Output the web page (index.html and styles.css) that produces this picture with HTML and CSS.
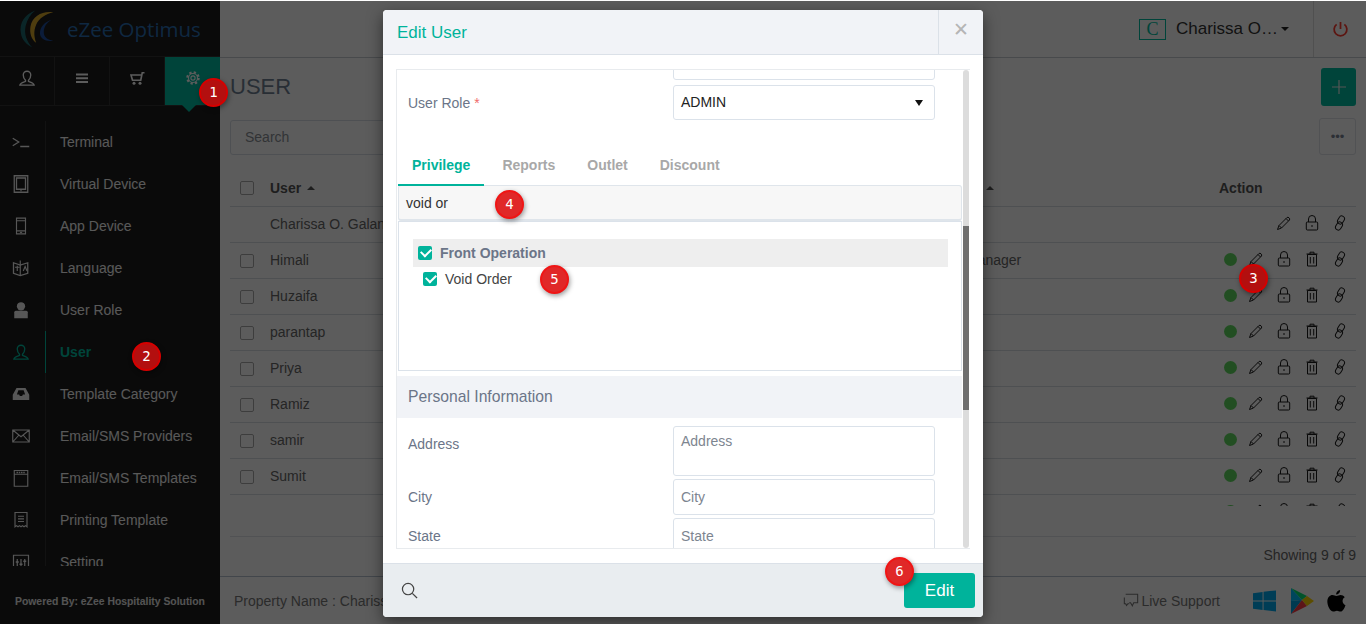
FILE: index.html
```html
<!DOCTYPE html>
<html lang="en">
<head>
<meta charset="utf-8">
<title>Edit User</title>
<link rel="stylesheet" href="styles.css">
</head>
<body>
<svg class="defs" width="0" height="0" aria-hidden="true">
  <symbol id="i-user" viewBox="0 0 24 24"><path d="M12 3a5 5 0 0 1 5 5c0 3-1.500 5.500-3 7v1.500c2.500 1 7 1.800 7.500 5H2.500c.5-3.200 5-4 7.500-5V15c-1.500-1.500-3-4-3-7a5 5 0 0 1 5-5z" fill="none" stroke="currentColor" stroke-width="1.800"/></symbol>
  <symbol id="i-pencil" viewBox="0 0 16 16"><path d="M3 10.500 11 2.500c1-1 3.500 1 2.500 2.500l-8 8L1.500 14.500zM3 10.500l2.500 2.500M10 3.500l2.500 2.500" fill="none" stroke="currentColor" stroke-width="1"/></symbol>
  <symbol id="i-lock" viewBox="0 0 16 16"><path d="M4.500 7V4a3.500 3.500 0 0 1 7 0v3M3.300 7h9.400a1 1 0 0 1 1 1v6a1 1 0 0 1-1 1H3.300a1 1 0 0 1-1-1V8a1 1 0 0 1 1-1zM8 10v2" fill="none" stroke="currentColor" stroke-width="1"/></symbol>
  <symbol id="i-trash" viewBox="0 0 16 16"><path d="M3.500 3.500h9v11.500h-9zM2.500 3h11M6 3V1.200h4V3M6.300 6v6.500M9.700 6v6.500" fill="none" stroke="currentColor" stroke-width="1"/></symbol>
  <symbol id="i-link" viewBox="0 0 16 16"><rect x="6.200" y="0.800" width="5.600" height="8.400" rx="2.800" transform="rotate(30 9 5)" fill="none" stroke="currentColor" stroke-width="1"/><rect x="4.200" y="6.800" width="5.600" height="8.400" rx="2.800" transform="rotate(30 7 11)" fill="none" stroke="currentColor" stroke-width="1"/></symbol>
</svg>

<div class="app">
  <aside class="sidebar">
    <div class="brand">
      <svg class="brand-logo" viewBox="0 0 42 42" aria-hidden="true">
        <path d="M17 1C6 5 0 14 2 25c1 7 6 12 12 15C8 33 5 26 7 17 9 10 12 5 17 1z" fill="#1d6a70"/>
        <path d="M36 3C26 1 14 6 12 18c-1 7 1 13 6 17-2-6-3-12 0-19C21 9 28 5 36 3z" fill="#d9a92c"/>
        <path d="M34 11c-7 2-12 7-12 14 0 5 5 9 14 8-6-1-10-4-10-9 0-6 3-10 8-13z" fill="#1f4fa0"/>
      </svg>
      <span class="brand-name">eZee Optimus</span>
    </div>
    <div class="side-tabs">
      <div class="side-tab"><svg class="tab-ico" aria-hidden="true"><use href="#i-user"/></svg></div>
      <div class="side-tab"><svg class="tab-ico" viewBox="0 0 24 24" aria-hidden="true"><path d="M4 6h16v2.500H4zM4 11h16v2.500H4zM4 16h16v2.500H4z" fill="currentColor"/></svg></div>
      <div class="side-tab"><svg class="tab-ico" viewBox="0 0 24 24" aria-hidden="true"><path d="M22 5h-3l-2 10H6L4 8h14" fill="none" stroke="currentColor" stroke-width="2.200"/><circle cx="8" cy="19" r="2" fill="currentColor"/><circle cx="16" cy="19" r="2" fill="currentColor"/></svg></div>
      <div class="side-tab side-tab-active"><svg class="tab-ico" viewBox="0 0 24 24" aria-hidden="true"><circle cx="12" cy="12" r="7.500" fill="none" stroke="currentColor" stroke-width="3" stroke-dasharray="3 2.900"/><circle cx="12" cy="12" r="6" fill="none" stroke="currentColor" stroke-width="1.500"/><circle cx="12" cy="12" r="2.800" fill="none" stroke="currentColor" stroke-width="1.500"/></svg></div>
    </div>
    <nav class="menu">
      <a class="menu-item"><span class="menu-ico"><svg class="m-svg" viewBox="0 0 24 24" aria-hidden="true"><path d="M1 7l8 5-8 5M11 18h12" fill="none" stroke="currentColor" stroke-width="1.700"/></svg></span><span class="menu-label">Terminal</span></a>
      <a class="menu-item"><span class="menu-ico"><svg class="m-svg" viewBox="0 0 24 24" aria-hidden="true"><path d="M3 1h18v22H3zM6 4h12v15H6z" fill="none" stroke="currentColor" stroke-width="1.700"/><circle cx="12" cy="21" r="1" fill="currentColor"/></svg></span><span class="menu-label">Virtual Device</span></a>
      <a class="menu-item"><span class="menu-ico"><svg class="m-svg" viewBox="0 0 24 24" aria-hidden="true"><path d="M6 1.500h12v21H6zM6 5h12M6 18.500h12" fill="none" stroke="currentColor" stroke-width="1.500"/><path d="M10.500 20.500h3" stroke="currentColor" stroke-width="1.500"/></svg></span><span class="menu-label">App Device</span></a>
      <a class="menu-item"><span class="menu-ico"><svg class="m-svg" viewBox="0 0 24 24" aria-hidden="true"><path d="M2 5l9 3 10-3v14l-10 3-9-3z" fill="none" stroke="currentColor" stroke-width="1.700"/><path d="M11 2v20M4 11h6M7 9v7M15 16l2.500-6 2.500 6" fill="none" stroke="currentColor" stroke-width="1.500"/></svg></span><span class="menu-label">Language</span></a>
      <a class="menu-item"><span class="menu-ico"><svg class="m-svg" viewBox="0 0 24 24" aria-hidden="true"><circle cx="12" cy="7" r="5.500" fill="currentColor"/><path d="M5 13h14a2 2 0 0 1 2 2v8H3v-8a2 2 0 0 1 2-2z" fill="currentColor"/></svg></span><span class="menu-label">User Role</span></a>
      <a class="menu-item menu-item-active"><span class="menu-ico"><svg class="m-svg" aria-hidden="true"><use href="#i-user"/></svg></span><span class="menu-label">User</span></a>
      <a class="menu-item"><span class="menu-ico"><svg class="m-svg" viewBox="0 0 24 24" aria-hidden="true"><path d="M6 4h12l5 9v7H1v-7zM6.500 12.500h3l1 2h3l1-2h3L15.500 7h-7z" fill="currentColor" fill-rule="evenodd"/></svg></span><span class="menu-label">Template Category</span></a>
      <a class="menu-item"><span class="menu-ico"><svg class="m-svg" viewBox="0 0 24 24" aria-hidden="true"><path d="M1 4h22v16H1zM1 4l11 9 11-9M1 20l8-9M23 20l-8-9" fill="none" stroke="currentColor" stroke-width="1.500"/></svg></span><span class="menu-label">Email/SMS Providers</span></a>
      <a class="menu-item"><span class="menu-ico"><svg class="m-svg" viewBox="0 0 24 24" aria-hidden="true"><path d="M3 2h18v21H3zM3 7h18" fill="none" stroke="currentColor" stroke-width="1.500"/><path d="M6 4.500h12" stroke="currentColor" stroke-width="2" stroke-dasharray="2 1"/></svg></span><span class="menu-label">Email/SMS Templates</span></a>
      <a class="menu-item"><span class="menu-ico"><svg class="m-svg" viewBox="0 0 24 24" aria-hidden="true"><path d="M4 2h16v19l-2-1.500-2 1.500-2-1.500-2 1.500-2-1.500-2 1.500-2-1.500-2 1.500zM8 7h8M8 10.500h8M8 14h8" fill="none" stroke="currentColor" stroke-width="1.500"/></svg></span><span class="menu-label">Printing Template</span></a>
      <a class="menu-item"><span class="menu-ico"><svg class="m-svg" viewBox="0 0 24 24" aria-hidden="true"><path d="M2 3h20v18H2zM7 8v11M12 8v11M17 8v11" fill="none" stroke="currentColor" stroke-width="1.600"/><path d="M5 12h4M10 15h4M15 11h4" stroke="currentColor" stroke-width="2"/></svg></span><span class="menu-label">Setting</span></a>
    </nav>
    <div class="powered">Powered By: eZee Hospitality Solution</div>
  </aside>

  <div class="main">
    <header class="topbar">
      <span class="avatar">C</span>
      <span class="user-name">Charissa O…</span>
      <span class="caret-down"></span>
      <span class="power">
        <svg class="power-ico" viewBox="0 0 24 24" aria-hidden="true"><path d="M12 2v10M6.500 5.500a9 9 0 1 0 11 0" fill="none" stroke="currentColor" stroke-width="2.500"/></svg>
      </span>
    </header>
    <section class="content">
      <div class="title-row">
        <h1 class="title">USER</h1>
        <button class="add-btn" type="button" aria-label="Add"><svg class="add-ico" viewBox="0 0 16 16" aria-hidden="true"><path d="M8 1v14M1 8h14" stroke="currentColor" stroke-width="1.200"/></svg></button>
      </div>
      <div class="tool-row">
        <div class="search">Search</div>
        <button class="more-btn" type="button">•••</button>
      </div>
      <div class="thead">
        <span class="chk"></span>
        <span class="th-name">User <i class="caret-up"></i></span>
        <span class="th-role">Role <i class="caret-up"></i></span>
        <span class="th-action">Action</span>
      </div>
      <div class="tbody">
        <div class="row"><span class="chk-none"></span><span class="cell-name">Charissa O. Galang</span><span class="cell-role"></span><span class="acts"><svg class="act"><use href="#i-pencil"/></svg><svg class="act"><use href="#i-lock"/></svg><svg class="act"><use href="#i-link"/></svg></span></div>
        <div class="row"><span class="chk"></span><span class="cell-name">Himali</span><span class="cell-role">Manager</span><span class="acts"><i class="dot"></i><svg class="act"><use href="#i-pencil"/></svg><svg class="act"><use href="#i-lock"/></svg><svg class="act"><use href="#i-trash"/></svg><svg class="act"><use href="#i-link"/></svg></span></div>
        <div class="row"><span class="chk"></span><span class="cell-name">Huzaifa</span><span class="cell-role"></span><span class="acts"><i class="dot"></i><svg class="act"><use href="#i-pencil"/></svg><svg class="act"><use href="#i-lock"/></svg><svg class="act"><use href="#i-trash"/></svg><svg class="act"><use href="#i-link"/></svg></span></div>
        <div class="row"><span class="chk"></span><span class="cell-name">parantap</span><span class="cell-role"></span><span class="acts"><i class="dot"></i><svg class="act"><use href="#i-pencil"/></svg><svg class="act"><use href="#i-lock"/></svg><svg class="act"><use href="#i-trash"/></svg><svg class="act"><use href="#i-link"/></svg></span></div>
        <div class="row"><span class="chk"></span><span class="cell-name">Priya</span><span class="cell-role"></span><span class="acts"><i class="dot"></i><svg class="act"><use href="#i-pencil"/></svg><svg class="act"><use href="#i-lock"/></svg><svg class="act"><use href="#i-trash"/></svg><svg class="act"><use href="#i-link"/></svg></span></div>
        <div class="row"><span class="chk"></span><span class="cell-name">Ramiz</span><span class="cell-role"></span><span class="acts"><i class="dot"></i><svg class="act"><use href="#i-pencil"/></svg><svg class="act"><use href="#i-lock"/></svg><svg class="act"><use href="#i-trash"/></svg><svg class="act"><use href="#i-link"/></svg></span></div>
        <div class="row"><span class="chk"></span><span class="cell-name">samir</span><span class="cell-role"></span><span class="acts"><i class="dot"></i><svg class="act"><use href="#i-pencil"/></svg><svg class="act"><use href="#i-lock"/></svg><svg class="act"><use href="#i-trash"/></svg><svg class="act"><use href="#i-link"/></svg></span></div>
        <div class="row"><span class="chk"></span><span class="cell-name">Sumit</span><span class="cell-role"></span><span class="acts"><i class="dot"></i><svg class="act"><use href="#i-pencil"/></svg><svg class="act"><use href="#i-lock"/></svg><svg class="act"><use href="#i-trash"/></svg><svg class="act"><use href="#i-link"/></svg></span></div>
        <div class="row"><span class="chk-none"></span><span class="cell-name"></span><span class="cell-role"></span><span class="acts"><i class="dot"></i><svg class="act"><use href="#i-pencil"/></svg><svg class="act"><use href="#i-lock"/></svg><svg class="act"><use href="#i-trash"/></svg><svg class="act"><use href="#i-link"/></svg></span></div>
      </div>
      <div class="showing">Showing 9 of 9</div>
    </section>
    <footer class="footer">
      <span class="prop">Property Name : Charissa</span>
      <span class="support">
        <svg class="support-ico" viewBox="0 0 18 18" aria-hidden="true"><path d="M3 1.500h13.500V11H12l-1.500 3.500L8.500 11H7" fill="none" stroke="currentColor" stroke-width="1.200"/><path d="M1.500 5v7h1.500l1 2 1.500-2H7" fill="none" stroke="currentColor" stroke-width="1.200"/></svg>
        Live Support
      </span>
      <svg class="store win" viewBox="0 0 24 22" aria-hidden="true"><path d="M0 3l10-1.500v9H0zM11 1.300 24 0v10.500H11zM0 11.500h10v9L0 19zM11 11.500h13V22l-13-1.500z" fill="#00aaee"/></svg>
      <svg class="store play" viewBox="0 0 24 26" aria-hidden="true"><path d="M1 0v13l11-1z" fill="#00c3ff"/><path d="M1 0l11 12 5-4z" fill="#00e676"/><path d="M1 26V13l11-1z" fill="#00a0e0"/><path d="M1 26l11-14 5 6z" fill="#ff3a44"/><path d="M12 12l5-4 7 5-7 5z" fill="#ffd500"/></svg>
      <svg class="store apple" viewBox="0 0 20 24" aria-hidden="true"><path d="M14 0c0 3-2 5-4.500 5C9.500 2.500 11.500.5 14 0zM10 6.500c1.500 0 2.500-1 4.500-1 1.500 0 3.500.8 4.500 2.500-3.500 2-3 7 .8 8.500-1 3-3 7-5.300 7-1.500 0-2.500-1-4-1s-2.500 1-4 1C3 23.500 0 17 0 12.500 0 8 3 5.500 5.500 5.500c2 0 3 1 4.500 1z" fill="#000"/></svg>
    </footer>
  </div>
</div>

<div class="overlay"></div>

<div class="modal" role="dialog" aria-label="Edit User">
  <div class="modal-head">
    <span class="modal-title">Edit User</span>
    <span class="modal-close">✕</span>
  </div>
  <div class="modal-body">
    <div class="scroller">
      <div class="form">
        <div class="form-row clip-row"><label class="lbl">Job Group</label><div class="input"></div></div>
        <div class="form-row role-row"><label class="lbl">User Role <em class="req">*</em></label><div class="input select">ADMIN<i class="sel-caret"></i></div></div>
        <div class="tabs">
          <span class="tab tab-active">Privilege</span>
          <span class="tab">Reports</span>
          <span class="tab">Outlet</span>
          <span class="tab">Discount</span>
        </div>
        <div class="filter">void or</div>
        <div class="tree">
          <div class="tree-head"><span class="cb"></span><span class="tree-title">Front Operation</span></div>
          <div class="tree-item"><span class="cb"></span><span>Void Order</span></div>
        </div>
        <div class="section-bar">Personal Information</div>
        <div class="form-row address-row"><label class="lbl lbl-top">Address</label><div class="input area ph">Address</div></div>
        <div class="form-row city-row"><label class="lbl">City</label><div class="input ph">City</div></div>
        <div class="form-row city-row"><label class="lbl">State</label><div class="input ph">State</div></div>
      </div>
      <div class="sbar"><div class="sthumb"></div></div>
    </div>
  </div>
  <div class="modal-foot">
    <svg class="foot-search" viewBox="0 0 18 18" aria-hidden="true"><circle cx="7.500" cy="7.500" r="6" fill="none" stroke="currentColor" stroke-width="1.300"/><path d="M12 12l5 5" stroke="currentColor" stroke-width="1.300"/></svg>
    <button class="edit-btn" type="button">Edit</button>
  </div>
</div>

<span class="badge dim b1">1</span>
<span class="badge dim b2">2</span>
<span class="badge dim b3">3</span>
<span class="badge b4">4</span>
<span class="badge b5">5</span>
<span class="badge b6">6</span>
</body>
</html>
```

FILE: styles.css
```css
* { box-sizing: border-box; }
html, body { margin: 0; height: 624px; overflow: hidden; }
body { font-family: "Liberation Sans", Arial, sans-serif; font-size: 14px; color: #333; background: #fff; position: relative; }
.defs { position: absolute; }
svg { display: block; }

.app { display: flex; height: 624px; padding-top: 1px; background: #fff; }
.overlay { position: absolute; inset: 1px 0 0 0; background: rgba(0,0,0,.64); z-index: 10; }

/* sidebar */
.sidebar { width: 220px; flex: none; background: #1c1c1c; display: flex; flex-direction: column; color: #f5f5f5; }
.brand { height: 56px; display: flex; align-items: center; padding-left: 19px; border-bottom: 1px solid #333; }
.brand-logo { width: 40px; height: 41px; flex: none; margin-top: 1px; }
.brand-name { font-family: "Open Sans", sans-serif; font-size: 20.500px; color: #2a6fb4; margin-left: 8px; }
.side-tabs { display: flex; height: 49px; border-bottom: 1px solid #333; }
.side-tab { width: 55px; display: flex; align-items: center; justify-content: center; border-right: 1px solid #333; padding-bottom: 6px; }
.side-tab-active { background: #00bda1; border-right: 0; position: relative; height: 48px; }
.side-tab-active::after { content: ""; position: absolute; left: 17px; top: 48px; border: 7px solid transparent; border-top-color: #00bda1; border-bottom: 0; }
.tab-ico { width: 18px; height: 18px; color: #fff; }
.menu { margin-top: 15px; height: 445px; overflow: hidden; flex: none; }
.menu-item { display: flex; height: 42px; align-items: center; }
.menu-ico { width: 46px; height: 42px; flex: none; border-right: 1px solid #333; display: flex; align-items: center; padding-left: 12px; }
.m-svg { width: 18px; height: 18px; color: #f2f2f2; }
.menu-label { margin-left: 14px; font-size: 14px; margin-top: -1px; }
.menu-item-active .menu-ico { border-right: 1px solid #00bda1; }
.menu-item-active .m-svg { color: #00bda1; }
.menu-item-active .menu-label { color: #00bda1; font-weight: 700; }
.powered { font-size: 10.400px; font-weight: 700; padding: 30px 0 0 15px; color: #e8e8e8; white-space: nowrap; }

/* main */
.main { flex: 1; display: flex; flex-direction: column; min-width: 0; }
.topbar { height: 57px; flex: none; display: flex; align-items: center; justify-content: flex-end; border-bottom: 1px solid #c8ccd2; background: #fff; }
.avatar { width: 27px; height: 21px; border: 1px solid #00bda1; color: #00bda1; font-family: "Liberation Serif", serif; font-size: 18px; line-height: 19px; text-align: center; margin-right: 10px; }
.user-name { font-size: 17px; color: #333; width: 105px; white-space: nowrap; }
.caret-down { border: 4px solid transparent; border-top: 4px solid #222; border-bottom: 0; margin: 0 24px 0 0; }
.power { width: 53px; height: 56px; border-left: 1px solid #ddd; display: flex; align-items: center; justify-content: center; }
.power-ico { width: 17px; height: 18px; color: #ff3b30; }
.content { flex: 1; padding: 10px 10px 0; min-height: 0; }
.title-row { display: flex; justify-content: space-between; align-items: center; height: 38px; }
.title { margin: 0; font-size: 22px; font-weight: 400; color: #6f7f94; }
.add-btn { width: 35px; height: 38px; background: #00bda1; border: 0; border-radius: 3px; color: #e8e8e8; padding: 0; display: flex; align-items: center; justify-content: center; }
.add-ico { width: 16px; height: 16px; }
.tool-row { display: flex; justify-content: space-between; margin-top: 12px; height: 37px; }
.search { width: 400px; height: 35px; margin-top: 2px; border: 1px solid #d8dee6; border-radius: 3px; color: #8a8f96; padding: 8px 14px; }
.more-btn { width: 37px; height: 37px; border: 1px solid #dfe2e8; border-radius: 3px; background: #fff; color: #7a8494; font: 13px/1 "Liberation Sans", Arial, sans-serif; padding: 0; }
.thead { margin-top: 16px; height: 36px; display: flex; align-items: center; padding: 0 0 2px 10px; border-bottom: 1px solid #d8dde2; font-weight: 700; color: #555; }
.th-name { margin-left: 16px; width: 680px; }
.th-role { width: 269px; }
.th-action { color: #555; }
.caret-up { display: inline-block; border: 4px solid transparent; border-bottom: 4px solid #555; border-top: 0; vertical-align: 3px; margin-left: 2px; }
.chk, .chk-none { width: 14px; height: 14px; flex: none; }
.chk { border: 1.500px solid #aaa; border-radius: 2px; background: #fff; }
.tbody { height: 299px; overflow: hidden; }
.row { height: 36px; flex: none; display: flex; align-items: center; padding-left: 10px; border-bottom: 1px solid #d8dde2; color: #666; }
.cell-name { margin-left: 16px; width: 702px; white-space: nowrap; margin-top: -1px; }
.cell-role { width: 200px; margin-top: -1px; margin-left: -6px; }
.acts { margin-left: auto; display: flex; align-items: center; gap: 12px; padding-right: 8px; margin-top: -3px; }
.act { width: 16px; height: 16px; color: #1a1a1a; }
.dot { width: 13px; height: 13px; background: #60d860; border-radius: 50%; margin-right: -1px; }
.showing { margin-top: 30px; height: 40px; border-top: 1px solid #dfe2e8; text-align: right; line-height: 37px; color: #666; }
.footer { height: 48px; flex: none; margin-top: 0; display: flex; align-items: center; padding: 0 20px 0 14px; border-top: 1px solid #b8c2cf; color: #777; }
.prop { flex: 1; white-space: nowrap; }
.support { display: flex; align-items: center; gap: 2px; margin-right: 33px; }
.support-ico { width: 16px; height: 16px; }
.store { flex: none; }
.win { width: 23px; height: 22px; margin-right: 14px; }
.play { width: 24px; height: 26px; margin-right: 13px; }
.apple { width: 19px; height: 22px; }

/* modal */
.modal { position: absolute; left: 383px; top: 10px; width: 600px; height: 607px; background: #fff; border-radius: 4px; z-index: 20; display: flex; flex-direction: column; box-shadow: 0 5px 15px rgba(0,0,0,.5); overflow: hidden; }
.modal-head { height: 45px; flex: none; display: flex; justify-content: space-between; align-items: stretch; background: #f1f3f7; border-bottom: 1px solid #dbe1e8; }
.modal-title { font-size: 17px; color: #00b39b; padding: 13px 0 0 14px; }
.modal-close { width: 45px; border-left: 1px solid #dbe1e8; color: #b5b5b5; font-family: "DejaVu Sans", sans-serif; font-size: 19px; font-weight: 700; text-align: center; line-height: 38px; }
.modal-body { flex: none; height: 508px; padding: 14px 13px 14px 13px; }
.scroller { height: 480px; display: flex; border: 1px solid #e8ebee; border-right: 0; overflow: hidden; }
.form { flex: 1; min-width: 0; overflow: hidden; }
.form-row { display: grid; grid-template-columns: 265px 262px; padding-left: 11px; align-items: center; }
.lbl { color: #6b7588; }
.req { color: #f06a6a; font-style: normal; }
.input { height: 36px; border: 1px solid #dbe2ea; border-radius: 3px; padding: 8px 7px; color: #333; background: #fff; }
.clip-row { height: 10px; align-items: end; }
.clip-row .input { height: 30px; margin-top: -20px; }
.clip-row .lbl { margin-top: -20px; margin-bottom: 10px; display: block; line-height: 17px; }
.role-row { margin-top: 5px; }
.role-row .input { height: 35px; }
.select { position: relative; padding-top: 8px; color: #222; }
.sel-caret { position: absolute; right: 11px; top: 14px; border: 4.500px solid transparent; border-top: 6px solid #111; border-bottom: 0; }
.tabs { display: flex; gap: 4px; margin-top: 27px; height: 38px; padding-left: 1px; }
.tab { padding: 10px 14px 0; font-weight: 700; color: #a8a8a8; height: 39px; }
.tab-active { color: #00b39b; border-bottom: 2px solid #00b39b; }
.filter { height: 36px; margin-left: 1px; background: #f7f7f7; border: 1px solid #dfe5eb; border-bottom-width: 2px; border-radius: 3px; padding: 9px 7px 0; color: #333; }
.tree { height: 150px; margin-left: 1px; border: 1px solid #dbe2ea; padding: 17px 13px 0 14px; }
.tree-head { height: 28px; background: #eee; display: flex; align-items: center; padding-left: 5px; }
.tree-title { font-weight: 700; color: #6b7588; margin-left: 8px; }
.cb { width: 14px; height: 14px; flex: none; border-radius: 2px; background: #00b39b; position: relative; }
.cb::after { content: ""; position: absolute; left: 3px; top: 2px; width: 8px; height: 5px; border-left: 2px solid #fff; border-bottom: 2px solid #fff; transform: rotate(-45deg); }
.tree-item { display: flex; align-items: center; gap: 8px; padding: 0 0 0 10px; height: 24px; color: #444; }
.section-bar { margin-top: 5px; height: 42px; background: #f1f3f7; color: #6b7588; font-size: 15.700px; line-height: 42px; padding-left: 11px; }
.address-row { margin-top: 8px; align-items: start; }
.lbl-top { padding-top: 10px; }
.area { height: 50px; }
.ph { color: #7d8590; padding-top: 9px; }
.address-row .ph { padding-top: 6px; }
.city-row { margin-top: 3px; }
.sbar { width: 6px; flex: none; background: #dcdcdc; margin-right: 1px; margin-left: 1px; border-radius: 3px; }
.sthumb { margin-top: 156px; height: 184px; background: #6f6f6f; }
.modal-foot { height: 54px; flex: none; background: #e9edf0; border-top: 1px solid #dbe1e8; display: flex; align-items: center; justify-content: space-between; padding: 0 8px 0 18px; }
.foot-search { width: 17px; height: 17px; color: #444; }
.edit-btn { width: 71px; height: 35px; background: #00b39b; color: #fff; border: 0; border-radius: 3px; font: 17px "Liberation Sans", Arial, sans-serif; }

/* numbered callouts */
.badge { position: absolute; z-index: 30; width: 29px; height: 29px; border-radius: 50%; background: #e02828; border: 2px solid #f01515; color: #fff; font: 14px/25px "DejaVu Sans Mono", monospace; text-align: center; box-shadow: 1px 2px 5px rgba(0,0,0,.4); }
.dim { background: #b30f0f; border-color: #d60000; }
.b1 { left: 199px; top: 78px; }
.b2 { left: 132px; top: 342px; }
.b3 { left: 1239px; top: 264px; }
.b4 { left: 495px; top: 190px; }
.b5 { left: 540px; top: 265px; }
.b6 { left: 885px; top: 557px; }
```
